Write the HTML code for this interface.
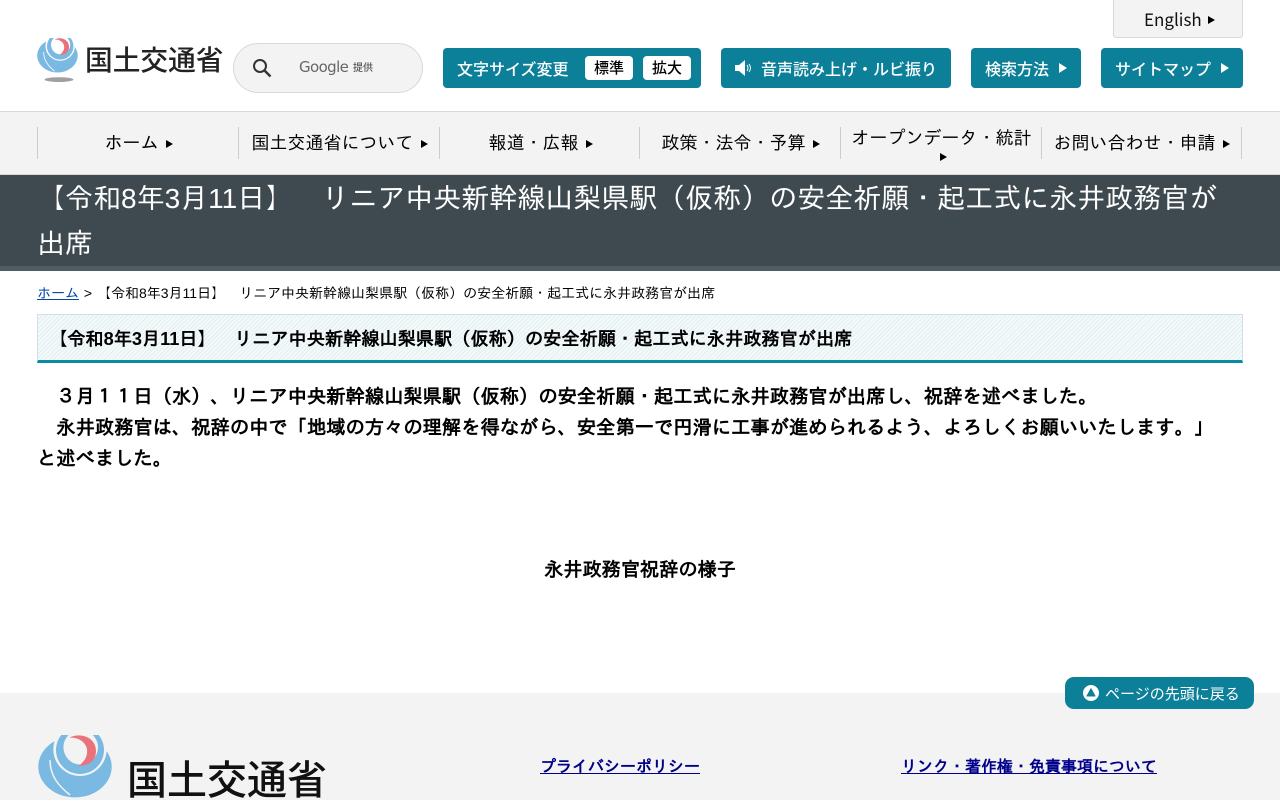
<!DOCTYPE html>
<html lang="ja"><head><meta charset="utf-8"><title>国土交通省</title>
<style>
*{box-sizing:border-box}
html,body{margin:0;padding:0;background:#fff}
body{width:1280px;height:800px;overflow:hidden;position:relative;font-family:"Liberation Sans","IPAGothic",sans-serif;color:#000}
.a{position:absolute;white-space:nowrap}
.btn{position:absolute;top:48px;height:40px;background:#0c7f99;border-radius:4px;color:#fff;font-family:"Noto Sans CJK JP",sans-serif;font-weight:500;font-size:16px;line-height:40px;white-space:nowrap}
.w{position:absolute;top:8px;height:24px;width:48px;background:#fff;border-radius:4px;color:#000;line-height:24px;text-align:center;font-size:15px}
.tri{position:absolute;width:0;height:0;border-left:8px solid #fff;border-top:5px solid transparent;border-bottom:5px solid transparent}
.nav{position:absolute;top:127px;height:32px;width:202px;border-left:1px solid #ccc;text-align:center;font-size:18px;line-height:32px;white-space:nowrap}
.nt{display:inline-block;width:0;height:0;border-left:7px solid #000;border-top:4px solid transparent;border-bottom:4px solid transparent;margin-left:7px;vertical-align:1px}
</style></head><body>

<svg class="a" style="left:37px;top:37.5px" width="42" height="36" viewBox="0 0 76 65">
<ellipse cx="37" cy="31.7" rx="36.7" ry="30.7" fill="#7ab9e2"/>
<path d="M12 25C12 42 22 52 32 60" fill="none" stroke="#fff" stroke-width="1.5"/>
<circle cx="42" cy="14.3" r="26.7" fill="#fff"/>
<circle cx="42" cy="15" r="24" fill="#7ab9e2"/>
<circle cx="42.7" cy="12.3" r="17.3" fill="#fff"/>
<path d="M31.3 2.7C42 -3 58 2 58 16C58 26 50 31 40.3 31C48 26 51 18 48 11C45 5 38 2 31.3 2.7Z" fill="#ea737b"/>
</svg>
<svg class="a" style="left:44px;top:77px" width="30" height="6" viewBox="0 0 30 6"><ellipse cx="15" cy="2.6" rx="14.5" ry="2.4" fill="#a0a0a0"/></svg>
<div class="a" style="left:85px;top:41px;font:500 27.7px/34px 'Noto Sans CJK JP',sans-serif;color:#222">国土交通省</div>

<div class="a" style="left:233px;top:43px;width:190px;height:50px;background:#f3f3f3;border:1px solid #d8d8d8;border-radius:25px"></div>
<svg class="a" style="left:251px;top:57px" width="22" height="22" viewBox="0 0 22 22"><circle cx="9" cy="9" r="6" fill="none" stroke="#333" stroke-width="2"/><path d="M13.5 13.5L19.5 19.5" stroke="#333" stroke-width="2.4"/></svg>
<div class="a" style="left:299px;top:57px;font:15px/20px 'DejaVu Sans',sans-serif;color:#666;letter-spacing:-.6px">Google</div>
<div class="a" style="left:353px;top:60px;font:500 10px/14px 'Noto Sans CJK JP',sans-serif;color:#555">提供</div>

<div class="a" style="left:1113px;top:-4px;width:130px;height:42px;background:#f3f3f3;border:1px solid #d8d8d8;border-radius:3px;font:17px/44px 'Noto Sans CJK JP',sans-serif;padding-left:30px;color:#111">English<span class="nt" style="margin-left:6px;vertical-align:2px"></span></div>

<div class="btn" style="left:443px;width:258px"><span class="a" style="left:14px">文字サイズ変更</span><span class="w" style="left:142px">標準</span><span class="w" style="left:200px">拡大</span></div>
<div class="btn" style="left:721px;width:230px"><svg class="a" style="left:13px;top:11px" width="20" height="18" viewBox="0 0 20 18"><path d="M1 6H5L11 1V17L5 12H1Z" fill="#fff"/><path d="M13 6Q15 9 13 12M15 5Q18 9 15 13" fill="none" stroke="#fff"/></svg><span class="a" style="left:40px">音声読み上げ・ルビ振り</span></div>
<div class="btn" style="left:971px;width:110px"><span class="a" style="left:14px">検索方法</span><span class="tri" style="left:88px;top:15px"></span></div>
<div class="btn" style="left:1101px;width:142px"><span class="a" style="left:14px">サイトマップ</span><span class="tri" style="left:120px;top:15px"></span></div>

<div class="a" style="left:0;top:111px;width:1280px;height:64px;background:#f3f3f3;border-top:1px solid #d8d8d8;border-bottom:1px solid #d8d8d8"></div>
<div class="nav" style="left:37px">ホーム<i class="nt"></i></div>
<div class="nav" style="left:238px">国土交通省について<i class="nt"></i></div>
<div class="nav" style="left:439px">報道・広報<i class="nt"></i></div>
<div class="nav" style="left:639px">政策・法令・予算<i class="nt"></i></div>
<div class="nav" style="left:840px;line-height:22px;white-space:normal;top:127px">オープンデータ・統計<br><i class="nt" style="display:block;margin:-1px auto 0;position:relative;left:2px;top:5px"></i></div>
<div class="nav" style="left:1041px;width:201px;border-right:1px solid #ccc">お問い合わせ・申請<i class="nt"></i></div>

<div class="a" style="left:0;top:175px;width:1280px;height:96px;background:#3e4a50;border-bottom:5px solid #4f5c63"></div>
<div class="a" style="left:37px;top:176px;width:1206px;white-space:normal;color:#fff;font-size:28px;line-height:45px">【令和8年3月11日】　リニア中央新幹線山梨県駅（仮称）の安全祈願・起工式に永井政務官が出席</div>

<div class="a" style="left:37px;top:283px;font-size:14px;line-height:20px"><span style="color:#0645ad;text-decoration:underline">ホーム</span><span style="margin:0 1px 0 1px"> &gt; </span>【令和8年3月11日】　リニア中央新幹線山梨県駅（仮称）の安全祈願・起工式に永井政務官が出席</div>

<div class="a" style="left:37px;top:314px;width:1206px;height:49px;border:1px solid #cfe1e6;border-bottom:3px solid #0c8aa3;background:repeating-linear-gradient(135deg,#e2eff2 0 1px,#f4f9fa 1px 3px);font-size:18.2px;font-weight:bold;line-height:48px;padding-left:11px">【令和8年3月11日】　リニア中央新幹線山梨県駅（仮称）の安全祈願・起工式に永井政務官が出席</div>

<div class="a" style="left:37px;top:382px;width:1206px;white-space:normal;font-size:19.3px;font-weight:bold;line-height:31px">　３月１１日（水）、リニア中央新幹線山梨県駅（仮称）の安全祈願・起工式に永井政務官が出席し、祝辞を述べました。<br>　永井政務官は、祝辞の中で「地域の方々の理解を得ながら、安全第一で円滑に工事が進められるよう、よろしくお願いいたします。」<br>と述べました。</div>

<div class="a" style="left:37px;top:556px;width:1206px;text-align:center;font-size:19.2px;font-weight:bold;line-height:30px">永井政務官祝辞の様子</div>

<div class="a" style="left:0;top:693px;width:1280px;height:107px;background:#f3f3f3"></div>
<div class="a" style="left:1065px;top:677px;width:189px;height:32px;background:#0c7f99;border-radius:9px;color:#fff;font:15px/33px 'Noto Sans CJK JP',sans-serif;padding-left:40px">ページの先頭に戻る</div>
<svg class="a" style="left:1083px;top:685px" width="16" height="16" viewBox="0 0 16 16"><circle cx="8" cy="8" r="8" fill="#fff"/><path d="M8 3.8L12 11H4Z" fill="#0c7f99" stroke="#0c7f99" stroke-linejoin="round"/></svg>

<svg class="a" style="left:38px;top:735px" width="76" height="65" viewBox="0 0 76 65">
<ellipse cx="37" cy="31.7" rx="36.7" ry="30.7" fill="#7ab9e2"/>
<path d="M12 25C12 42 22 52 32 60" fill="none" stroke="#f3f3f3" stroke-width="1.5"/>
<circle cx="42" cy="14.3" r="26.7" fill="#f3f3f3"/>
<circle cx="42" cy="15" r="24" fill="#7ab9e2"/>
<circle cx="42.7" cy="12.3" r="17.3" fill="#f3f3f3"/>
<path d="M31.3 2.7C42 -3 58 2 58 16C58 26 50 31 40.3 31C48 26 51 18 48 11C45 5 38 2 31.3 2.7Z" fill="#ea737b"/>
</svg>
<div class="a" style="left:127px;top:752px;font:500 40px/50px 'Noto Sans CJK JP',sans-serif;color:#111">国土交通省</div>

<div class="a" style="left:540px;top:757px;font-size:16px;font-weight:bold;line-height:22px;color:#00008b;text-decoration:underline">プライバシーポリシー</div>
<div class="a" style="left:901px;top:757px;font-size:16px;font-weight:bold;line-height:22px;color:#00008b;text-decoration:underline">リンク・著作権・免責事項について</div>
</body></html>
